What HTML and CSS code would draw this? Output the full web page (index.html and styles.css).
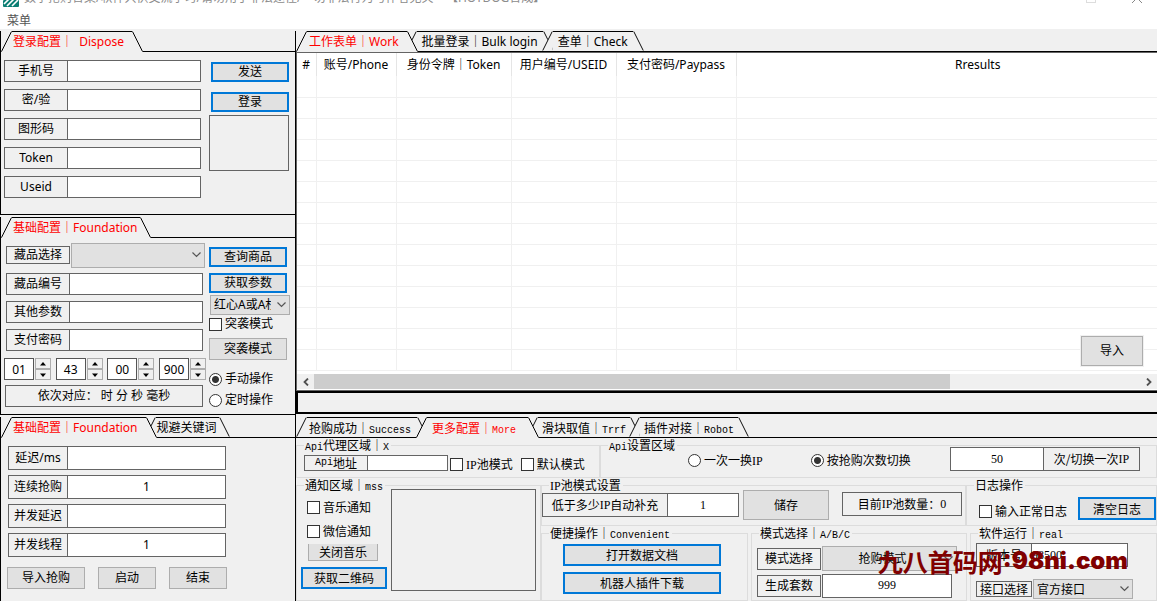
FILE: index.html
```
<!DOCTYPE html>
<html lang="zh-CN">
<head>
<meta charset="utf-8">
<title>数字抢购合集</title>
<link rel="stylesheet" href="styles.css">
</head>
<body>
<svg width="0" height="0" class="defs" aria-hidden="true">
  <symbol id="slope-l" viewBox="0 0 11 21"><path class="fill" d="M0 21L10 0H11V21Z"/><path class="edge" d="M.5 20.5L10.5 .5"/></symbol>
  <symbol id="slope-r" viewBox="0 0 11 21"><path class="fill" d="M11 21L1 0H0V21Z"/><path class="edge" d="M.5 .5L10.5 20.5"/></symbol>
  <symbol id="chev" viewBox="0 0 9 6"><path d="M.5 .5L4.500 4.500L8.500 .5" fill="none" stroke="#555" stroke-width="1.200"/></symbol>
  <symbol id="up" viewBox="0 0 6 4"><path d="M3 0L6 3.500H0Z"/></symbol>
  <symbol id="down" viewBox="0 0 6 4"><path d="M3 4L6 .5H0Z"/></symbol>
</svg>
<header class="titlebar">
  <svg class="logo" viewBox="0 0 16 16"><rect width="16" height="16" rx="1" fill="#0c7f74"/><path d="M0 9L8 1M1 13L13 1M4 15L15 4M9 15L15 9" stroke="#fff" stroke-width="1.600"/></svg>
  <h1>数字抢购合集/软件只供交流学习/请勿用于非法途径/一切非法行为与作者无关&nbsp; &nbsp; 【HOTDOG合成】</h1>
  <div class="winbtns">
    <button aria-label="最大化"><svg viewBox="0 0 10 10"><rect x=".5" y=".5" width="9" height="9" fill="none" stroke="#ddd"/></svg></button>
    <button aria-label="关闭"><svg viewBox="0 0 10 10"><path d="M0 0L10 10M10 0L0 10" stroke="#888"/></svg></button>
  </div>
</header>
<nav class="menubar"><button>菜单</button></nav>
<div class="app">
  <div class="left">
    <section class="panel p1">
      <div class="tabs"><button class="tab active"><svg><use href="#slope-l"/></svg><span>登录配置｜&nbsp; Dispose</span><svg><use href="#slope-r"/></svg></button></div>
      <div class="panel-body">
        <div class="fields">
          <div class="field"><label for="phone">手机号</label><input id="phone"></div>
          <div class="field"><label for="pwd">密/验</label><input id="pwd"></div>
          <div class="field"><label for="cap">图形码</label><input id="cap"></div>
          <div class="field"><label for="token">Token</label><input id="token"></div>
          <div class="field"><label for="useid">Useid</label><input id="useid"></div>
        </div>
        <div class="side">
          <button class="btn primary">发送</button>
          <button class="btn primary">登录</button>
          <div class="frame captcha"></div>
        </div>
      </div>
    </section>
    <section class="panel p2">
      <div class="tabs"><button class="tab active"><svg><use href="#slope-l"/></svg><span>基础配置｜Foundation</span><svg><use href="#slope-r"/></svg></button></div>
      <div class="panel-body">
        <div class="mainside">
          <div class="fields">
            <div class="field pick"><label for="item">藏品选择</label><div class="select"><select id="item"><option></option></select><svg><use href="#chev"/></svg></div></div>
            <div class="field"><label for="itemno">藏品编号</label><input id="itemno"></div>
            <div class="field"><label for="other">其他参数</label><input id="other"></div>
            <div class="field"><label for="paypwd">支付密码</label><input id="paypwd"></div>
          </div>
          <div class="spins">
            <div class="spin"><input aria-label="时" value="01"><div><button aria-label="增加"><svg><use href="#up"/></svg></button><button aria-label="减少"><svg><use href="#down"/></svg></button></div></div>
            <div class="spin"><input aria-label="分" value="43"><div><button aria-label="增加"><svg><use href="#up"/></svg></button><button aria-label="减少"><svg><use href="#down"/></svg></button></div></div>
            <div class="spin"><input aria-label="秒" value="00"><div><button aria-label="增加"><svg><use href="#up"/></svg></button><button aria-label="减少"><svg><use href="#down"/></svg></button></div></div>
            <div class="spin"><input aria-label="毫秒" value="900"><div><button aria-label="增加"><svg><use href="#up"/></svg></button><button aria-label="减少"><svg><use href="#down"/></svg></button></div></div>
          </div>
          <div class="frame note">依次对应： 时 分 秒 毫秒</div>
        </div>
        <div class="side">
          <button class="btn primary">查询商品</button>
          <button class="btn primary">获取参数</button>
          <div class="select small"><select aria-label="红心"><option>红心A或A杉</option></select><svg><use href="#chev"/></svg></div>
          <label class="check"><input type="checkbox">突袭模式</label>
          <button class="btn raid">突袭模式</button>
          <label class="check radio"><input type="radio" name="op" checked>手动操作</label>
          <label class="check radio"><input type="radio" name="op">定时操作</label>
        </div>
      </div>
    </section>
    <section class="panel p3">
      <div class="tabs"><button class="tab active"><svg><use href="#slope-l"/></svg><span>基础配置｜Foundation</span><svg><use href="#slope-r"/></svg></button><button class="tab"><svg><use href="#slope-l"/></svg><span>规避关键词</span><svg><use href="#slope-r"/></svg></button></div>
      <div class="panel-body">
        <div class="fields">
          <div class="field"><label for="delay">延迟/ms</label><input id="delay"></div>
          <div class="field"><label for="cont">连续抢购</label><input id="cont" value="1"></div>
          <div class="field"><label for="cdelay">并发延迟</label><input id="cdelay"></div>
          <div class="field"><label for="threads">并发线程</label><input id="threads" value="1"></div>
        </div>
        <div class="actions"><button class="btn wide">导入抢购</button><button class="btn">启动</button><button class="btn">结束</button></div>
      </div>
    </section>
  </div>
  <main class="right">
    <div class="tabs"><button class="tab active"><svg><use href="#slope-l"/></svg><span>工作表单｜Work</span><svg><use href="#slope-r"/></svg></button><button class="tab"><svg><use href="#slope-l"/></svg><span>批量登录｜Bulk login</span><svg><use href="#slope-r"/></svg></button><button class="tab"><svg><use href="#slope-l"/></svg><span>查单｜Check</span><svg><use href="#slope-r"/></svg></button></div>
    <div class="list">
      <div class="viewport">
        <table>
          <colgroup><col class="c1"><col class="c2"><col class="c3"><col class="c4"><col class="c5"><col class="c6"></colgroup>
          <thead><tr><th>#</th><th>账号/Phone</th><th>身份令牌｜Token</th><th>用户编号/USEID</th><th>支付密码/Paypass</th><th>Rresults</th></tr></thead>
          <tbody>
            <tr><td></td><td></td><td></td><td></td><td></td><td></td></tr>
            <tr><td></td><td></td><td></td><td></td><td></td><td></td></tr>
            <tr><td></td><td></td><td></td><td></td><td></td><td></td></tr>
            <tr><td></td><td></td><td></td><td></td><td></td><td></td></tr>
            <tr><td></td><td></td><td></td><td></td><td></td><td></td></tr>
            <tr><td></td><td></td><td></td><td></td><td></td><td></td></tr>
            <tr><td></td><td></td><td></td><td></td><td></td><td></td></tr>
            <tr><td></td><td></td><td></td><td></td><td></td><td></td></tr>
            <tr><td></td><td></td><td></td><td></td><td></td><td></td></tr>
            <tr><td></td><td></td><td></td><td></td><td></td><td></td></tr>
            <tr><td></td><td></td><td></td><td></td><td></td><td></td></tr>
            <tr><td></td><td></td><td></td><td></td><td></td><td></td></tr>
            <tr><td></td><td></td><td></td><td></td><td></td><td></td></tr>
            <tr><td></td><td></td><td></td><td></td><td></td><td></td></tr>
          </tbody>
        </table>
      </div>
      <div class="scroll"><button aria-label="向左"><svg viewBox="0 0 6 8"><path d="M5 .5L1.500 4L5 7.500" fill="none" stroke="#505050" stroke-width="1.800"/></svg></button><div class="track"><div class="thumb"></div></div><button aria-label="向右"><svg viewBox="0 0 6 8"><path d="M1 .5L4.500 4L1 7.500" fill="none" stroke="#505050" stroke-width="1.800"/></svg></button></div>
      <button class="btn import">导入</button>
    </div>
    <div class="status"></div>
    <div class="song">
      <div class="tabs"><button class="tab"><svg><use href="#slope-l"/></svg><span>抢购成功｜<i>Success</i></span><svg><use href="#slope-r"/></svg></button><button class="tab active"><svg><use href="#slope-l"/></svg><span>更多配置｜<i>More</i></span><svg><use href="#slope-r"/></svg></button><button class="tab"><svg><use href="#slope-l"/></svg><span>滑块取值｜<i>Trrf</i></span><svg><use href="#slope-r"/></svg></button><button class="tab"><svg><use href="#slope-l"/></svg><span>插件对接｜<i>Robot</i></span><svg><use href="#slope-r"/></svg></button></div>
      <div class="row-api">
        <fieldset><legend><i>Api</i>代理区域｜<i>X</i></legend>
          <div class="gb proxy">
            <div class="field"><label for="api"><i>Api</i>地址</label><input id="api"></div>
            <label class="check"><input type="checkbox"><span><b>IP</b>池模式</span></label>
            <label class="check"><input type="checkbox">默认模式</label>
          </div>
        </fieldset>
        <fieldset><legend><i>Api</i>设置区域</legend>
          <div class="gb apiset">
            <label class="check radio"><input type="radio" name="sw"><span>一次一换<b>IP</b></span></label>
            <label class="check radio"><input type="radio" name="sw" checked>按抢购次数切换</label>
            <div class="field"><input id="times" value="50"><label for="times">次/切换一次<b>IP</b></label></div>
          </div>
        </fieldset>
      </div>
      <div class="row-more">
        <fieldset><legend>通知区域｜<i>mss</i></legend>
          <div class="gb notify">
            <div class="notify-list">
              <label class="check"><input type="checkbox">音乐通知</label>
              <label class="check"><input type="checkbox">微信通知</label>
              <button class="btn mute">关闭音乐</button>
              <button class="btn primary">获取二维码</button>
            </div>
            <div class="frame qr"></div>
          </div>
        </fieldset>
        <div class="groups">
          <div class="row-pool">
            <fieldset><legend><b>IP</b>池模式设置</legend>
              <div class="gb pool">
                <div class="field"><label for="low">低于多少<b>IP</b>自动补充</label><input id="low" value="1"></div>
                <button class="btn">储存</button>
                <div class="frame count">目前<b>IP</b>池数量：<b>0</b></div>
              </div>
            </fieldset>
            <fieldset><legend>日志操作</legend>
              <div class="gb log">
                <label class="check"><input type="checkbox">输入正常日志</label>
                <button class="btn primary">清空日志</button>
              </div>
            </fieldset>
          </div>
          <div class="row-run">
            <fieldset><legend>便捷操作｜<i>Convenient</i></legend>
              <div class="gb conv"><button class="btn primary">打开数据文档</button><button class="btn primary">机器人插件下载</button></div>
            </fieldset>
            <fieldset><legend>模式选择｜<i>A/B/C</i></legend>
              <div class="gb mode">
                <div class="field pick"><label for="mode">模式选择</label><div class="select"><select id="mode"><option>抢购模式</option></select><svg><use href="#chev"/></svg></div></div>
                <div class="field"><label for="sets">生成套数</label><input id="sets" value="999"></div>
              </div>
            </fieldset>
            <fieldset><legend>软件运行｜<i>real</i></legend>
              <div class="gb run">
                <div class="field"><label for="ver">版本号</label><input id="ver" value="98500"></div>
                <div class="field pick"><label for="port">接口选择</label><div class="select"><select id="port"><option>官方接口</option></select><svg><use href="#chev"/></svg></div></div>
              </div>
            </fieldset>
          </div>
        </div>
      </div>
    </div>
  </main>
</div>
<div class="watermark">九八首码网<b>:98ni.com</b></div>
</body>
</html>
```
FILE: styles.css
```
* { box-sizing: border-box; }
body {
  margin: 0;
  height: 100vh;
  overflow: hidden;
  display: flex;
  flex-direction: column;
  position: relative;
  background: #f0f0f0;
  color: #000;
  font: 12px/16px "Noto Sans", "Noto Sans CJK SC", sans-serif;
}
button, input, select { font: inherit; color: inherit; margin: 0; padding: 0; border-radius: 0; }
button { border: 0; background: none; white-space: nowrap; }
i { font-style: normal; }
.defs { position: absolute; }
.fill { fill: #f0f0f0; }
.edge { stroke: #000; stroke-width: 1; fill: none; }

/* title and menu */
.titlebar { height: 7px; flex: none; display: flex; align-items: flex-end; overflow: hidden; background: #fff; padding: 0 15px 0 3px; color: #8c8c8c; }
.titlebar .logo { width: 16px; height: 16px; flex: none; margin-right: 5px; }
.titlebar h1 { margin: 0; font-size: 12px; line-height: 18px; font-weight: 400; flex: 1; white-space: nowrap; }
.winbtns { display: flex; gap: 36px; padding-bottom: 4px; }
.winbtns button { display: flex; }
.winbtns svg { width: 10px; height: 10px; }
.menubar { flex: none; height: 22px; background: #fff; padding: 5px 7px 0; color: #555; }
.menubar button { display: block; line-height: 17px; }

.app { flex: 1; min-height: 0; display: grid; grid-template-columns: 296px minmax(0, 1fr); padding-top: 2px; }
.left { display: flex; flex-direction: column; gap: 2px; min-height: 0; border-right: 1px solid #000; }
.right { display: flex; flex-direction: column; min-height: 0; }

/* tabs */
.tabs { display: flex; height: 21px; flex: none; box-shadow: inset 0 -1px #000; isolation: isolate; }
.tab { display: flex; height: 21px; margin-right: -12px; position: relative; }
.tab svg { width: 11px; height: 21px; flex: none; }
.tab span { display: block; height: 20px; line-height: 20px; border-top: 1px solid #000; background: #f0f0f0; padding: 0 2px 0 1px; }
.tab:not(.active) { box-shadow: inset 0 -1px #000; }
.tab:not(.active) svg { height: 20px; overflow: hidden; }
.tab:not(.active) use { height: 21px; }
.tab.active { z-index: 1; color: #f00; }
.tab.active span { height: 21px; }
.p1 .active span, .p3 .active span { padding-right: 8px; }
.right .tab span { padding: 0 5px; }
.right .tab:first-child span { padding: 0 8px 0 2px; }
.song .tab span { padding: 0 4px; }
.song .tab:first-child span { padding: 0 6px 0 2px; }
.song .tab.active span { padding: 0 12px 0 5px; }

/* controls */
.field { display: flex; height: 22px; }
.field label, .frame { border: 1px solid #646464; display: flex; align-items: center; justify-content: center; white-space: nowrap; line-height: 16px; }
.field label { flex: none; width: 64px; }
.field input { flex: 1; min-width: 0; width: 0; margin-left: -1px; border: 1px solid #646464; background: #fff; text-align: center; }
.btn { background: #e1e1e1; border: 1px solid #adadad; text-align: center; line-height: 16px; }
.btn.primary { border: 2px solid #0078d7; }
.check { display: flex; align-items: center; gap: 3px; height: 14px; white-space: nowrap; }
.check input { appearance: none; flex: none; width: 13px; height: 13px; border: 1px solid #333; background: #fff; }
.radio input { border-radius: 50%; }
.radio input:checked { background: radial-gradient(circle, #333 0 3px, #fff 4px); }
.select { position: relative; display: flex; flex: 1; min-width: 0; }
.select select { appearance: none; width: 100%; border: 1px solid #adadad; background: #e1e1e1; }
.select svg { position: absolute; right: 4px; top: 50%; width: 9px; height: 6px; margin-top: -3px; }
.pick { gap: 1px; }

/* left panels */
.panel { border-left: 1px solid #000; border-bottom: 1px solid #000; display: flex; flex-direction: column; }
.p1 { height: 184px; }
.p2 { height: 198px; }
.p3 { flex: 1; border-bottom: 0; }
.panel-body { flex: 1; display: flex; }
.p1 .panel-body { padding: 8px 6px 0 3px; gap: 8px; }
.p1 .fields { width: 197px; display: flex; flex-direction: column; gap: 7px; }
.p1 .side { flex: 1; display: flex; flex-direction: column; padding-top: 2px; }
.p1 .side .btn { height: 20px; margin: 0 0 10px 2px; }
.captcha { height: 56px; margin-top: -7px; }
.p2 .panel-body { padding: 5px 5px 0 3px; }
.mainside { width: 199px; flex: none; margin-right: 6px; }
.p2 .fields { display: flex; flex-direction: column; gap: 6px; padding-left: 2px; }
.p2 .pick { height: 24px; align-items: center; }
.p2 .pick .select { height: 25px; margin-right: -2px; }
.spins { display: flex; justify-content: space-between; margin: 7px -3px 0 0; }
.spin { display: flex; gap: 1px; }
.spin input { width: 30px; height: 22px; border: 1px solid #555; background: #fff; text-align: center; }
.spin div { display: flex; flex-direction: column; flex: 0 0 16px; }
.spin button { flex: 1; display: flex; align-items: center; justify-content: center; border: 1px solid #adadad; background: #f0f0f0; }
.spin svg { width: 6px; height: 4px; }
.note { height: 22px; margin: 5px 0 0 1px; white-space: pre; }
.p2 .side { flex: 1; min-width: 0; display: flex; flex-direction: column; padding-top: 4px; }
.p2 .side .btn { height: 20px; margin: 0 3px 6px 0; }
.p2 .side .select { flex: none; height: 20px; margin: -4px 0 2px 1px; }
.p2 .side select { padding: 0 18px 0 3px; }
.p2 .side .raid { height: 22px; margin: 7px 3px 12px 0; }
.p2 .side .radio { margin-bottom: 7px; }
.p3 .panel-body { flex-direction: column; padding: 8px 0 0 7px; }
.p3 .fields { width: 218px; display: flex; flex-direction: column; gap: 5px; }
.p3 .field { height: 24px; }
.p3 .field label { width: 60px; }
.actions { display: flex; gap: 13px; margin: 10px 0 0 -1px; }
.actions .btn { width: 58px; height: 22px; }
.actions .wide { width: 78px; }

/* order list */
.list { position: relative; background: #fff; border-left: 1px solid #646464; border-bottom: 1px solid #646464; border-top: 1px solid #646464; }
.viewport { overflow: hidden; height: 321px; }
table { table-layout: fixed; border-collapse: collapse; width: 923px; }
.c1 { width: 19px; } .c2 { width: 80px; } .c3 { width: 115px; } .c4 { width: 105px; } .c5 { width: 120px; }
th { height: 23px; padding: 0; font-weight: 400; white-space: nowrap; border-right: 1px solid #e5e5e5; }
td { height: 21px; padding: 0; border-right: 1px solid #f0f0f0; border-bottom: 1px solid #f0f0f0; }
.scroll { display: flex; height: 16px; border-bottom: 1px solid #fff; background: #f0f0f0; }
.scroll button { width: 17px; display: flex; align-items: center; justify-content: center; flex: none; }
.scroll svg { width: 6px; height: 8px; }
.track { flex: 1; }
.thumb { width: 77%; height: 100%; background: #cdcdcd; }
.import { position: absolute; right: 14px; bottom: 24px; width: 62px; height: 30px; box-shadow: 0 0 0 1px #f0f0f0; }
.status { height: 23px; flex: none; border: 2px solid #000; border-right: 0; margin-bottom: 3px; }

/* bottom groups */
.song { font-family: "Noto Sans CJK SC", sans-serif; flex: 1; min-height: 0; display: flex; flex-direction: column; }
.song i { font-family: "Liberation Mono", monospace; font-size: 10px; }
.song b, .song input { font-family: "Liberation Serif", serif; font-weight: 400; font-size: 12px; }
fieldset { margin: 0; min-width: 0; padding: 0; border: 1px solid #dcdcdc; }
legend { margin-left: 7px; padding: 0 2px 0 1px; height: 14px; line-height: 14px; white-space: nowrap; }
.gb { margin-top: -6px; display: flex; }
.row-api { display: grid; grid-template-columns: 304px minmax(0, 1fr); height: 40px; flex: none; }
.proxy { padding: 9px 0 0 7px; align-items: flex-start; }
.proxy .field { height: 16px; width: 144px; margin-right: 2px; }
.proxy .check { margin-right: 8px; height: 18px; }
.apiset { padding-right: 16px; align-items: flex-start; padding-top: 1px; }
.apiset .check { height: 26px; margin-left: 87px; }
.apiset .check + .check { margin-left: 48px; }
.apiset .field { height: 24px; width: 189px; margin-left: auto; }
.apiset .field label { width: 97px; margin-left: -1px; }
.row-more { flex: 1; min-height: 0; display: grid; grid-template-columns: 245px minmax(0, 1fr); }
.notify { padding: 3px 4px 0 4px; gap: 4px; }
.notify-list { width: 86px; display: flex; flex-direction: column; }
.notify-list .check { margin: 11px 0 0 6px; height: 14px; }
.notify-list .check + .check { margin-top: 10px; }
.mute { height: 17px; margin: 6px 9px 0 7px; border-top: 0; }
.notify-list .primary { height: 22px; margin-top: 6px; }
.qr { flex: 1; height: 102px; }
.groups { display: flex; flex-direction: column; min-height: 0; }
.row-pool { display: grid; grid-template-columns: 425px minmax(0, 1fr); height: 48px; flex: none; }
.pool { padding: 4px 3px 0 0; align-items: flex-start; }
.pool .field { width: 197px; height: 24px; margin-top: 3px; }
.pool .field label { width: 126px; }
.pool .btn { width: 86px; height: 30px; margin-left: 4px; }
.count { width: 120px; height: 24px; margin: 2px 0 0 auto; }
.log { padding: 11px 0 0 12px; align-items: flex-start; justify-content: space-between; }
.log .check { height: 28px; }
.log .btn { width: 78px; height: 23px; }
.row-run { flex: 1; display: grid; grid-template-columns: 207px 216px minmax(0, 1fr); gap: 3px; }
.conv { flex-direction: column; gap: 6px; padding: 10px 26px 0 21px; }
.conv .btn { height: 22px; }
.mode { flex-direction: column; gap: 2px; padding: 12px 9px 0 5px; }
.mode .field { height: 25px; align-items: center; font-family: "Noto Sans", "Noto Sans CJK SC", sans-serif; }
.mode .field label { height: 22px; }
.mode .field input { height: 24px; margin: 0 5px 0 1px; }
.mode .select { height: 25px; }
.mode select { text-align: center; text-align-last: center; padding-right: 14px; }
.run { flex-direction: column; gap: 12px; padding: 9px 23px 0 5px; }
.run .field { height: 24px; }
.run .field label { width: 56px; }
.run .field input { margin-right: 5px; text-align: left; }
.run .pick { height: 20px; align-items: center; }
.run .pick label { height: 16px; }
.run .select { height: 20px; }
.run select { padding-left: 3px; }

.watermark { position: absolute; right: 29px; bottom: 25px; color: #800000; font: 700 25px/30px "Noto Sans CJK SC", sans-serif; white-space: nowrap; display: flex; pointer-events: none; }
.watermark b { font-family: Inter, "Noto Sans", sans-serif; font-size: 24px; }
```
